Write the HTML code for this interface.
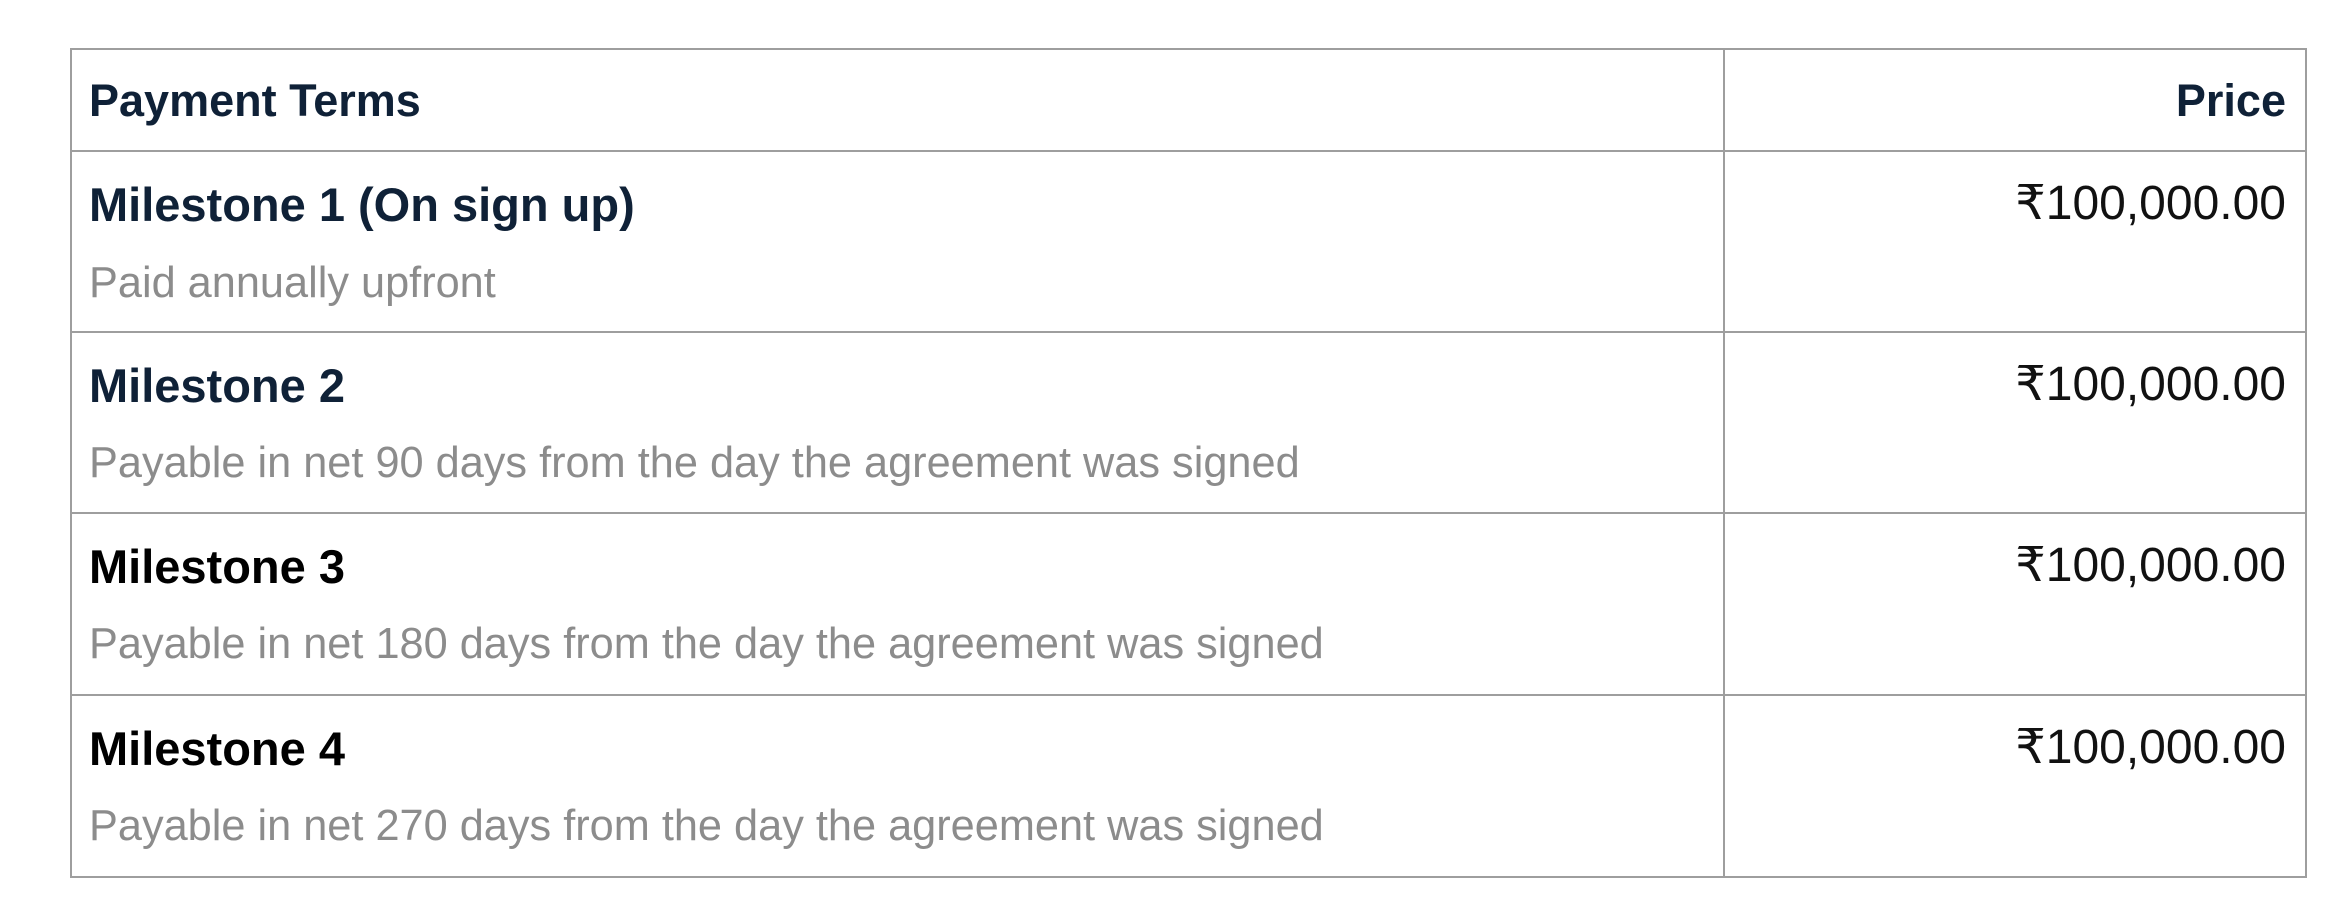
<!DOCTYPE html>
<html><head><meta charset="utf-8"><style>
html,body{margin:0;padding:0;width:2352px;height:903px;background:#fff;overflow:hidden;font-family:"Liberation Sans",Arial,sans-serif;}
.box{position:absolute;left:70px;top:48px;width:2233px;height:826px;border:2px solid #9e9e9e;}
.h{position:absolute;left:70px;width:2235px;height:2px;background:#9e9e9e;}
.v{position:absolute;left:1723px;top:48px;width:2px;height:828px;background:#9e9e9e;}
.t{position:absolute;white-space:nowrap;line-height:1;}
.hd{font-weight:bold;font-size:45px;color:#0f2137;}
.ti{font-weight:bold;font-size:47px;}
.sub{font-size:43.3px;color:#8c8c8c;}
.pr{font-size:48px;color:#111;right:66px;}
</style></head><body>
<div class="box"></div>
<div class="h" style="top:150px"></div>
<div class="h" style="top:331px"></div>
<div class="h" style="top:512px"></div>
<div class="h" style="top:694px"></div>
<div class="v"></div>

<div class="t hd" style="left:89px;top:78px">Payment Terms</div>
<div class="t hd" style="right:66px;top:78px">Price</div>

<div class="t ti" style="left:89px;top:181px;color:#0f2137">Milestone 1 (On sign up)</div>
<div class="t sub" style="left:89px;top:262px">Paid annually upfront</div>
<div class="t pr" style="top:180px">₹100,000.00</div>

<div class="t ti" style="left:89px;top:362px;color:#0f2137">Milestone 2</div>
<div class="t sub" style="left:89px;top:442px">Payable in net 90 days from the day the agreement was signed</div>
<div class="t pr" style="top:361px">₹100,000.00</div>

<div class="t ti" style="left:89px;top:543px;color:#000">Milestone 3</div>
<div class="t sub" style="left:89px;top:623px">Payable in net 180 days from the day the agreement was signed</div>
<div class="t pr" style="top:542px">₹100,000.00</div>

<div class="t ti" style="left:89px;top:725px;color:#000">Milestone 4</div>
<div class="t sub" style="left:89px;top:805px">Payable in net 270 days from the day the agreement was signed</div>
<div class="t pr" style="top:724px">₹100,000.00</div>
</body></html>
